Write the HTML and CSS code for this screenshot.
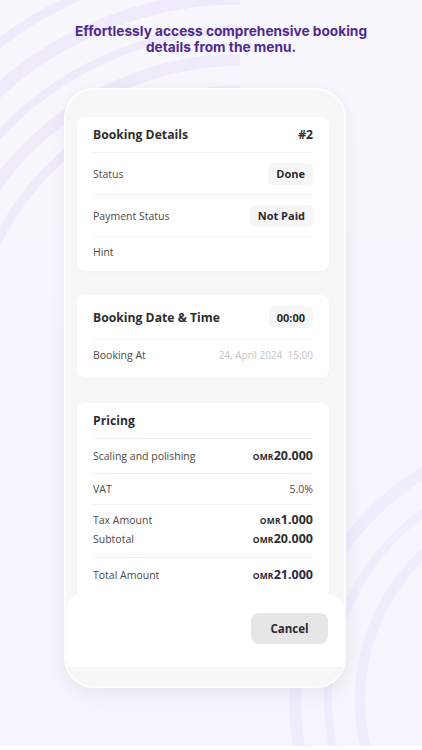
FILE: index.html
```html
<!DOCTYPE html>
<html>
<head>
<meta charset="utf-8">
<link rel="stylesheet" href="styles.css">
</head>
<body>
<div class="screen">
  <svg class="bg" width="422" height="750" viewBox="0 0 422 750">
    <g fill="none" stroke="#e6e0fa" stroke-opacity="0.5">
      <path d="M -30 360 A 270 270 0 0 1 240 90" stroke-width="9"/>
      <path d="M -60 360 A 300 300 0 0 1 240 60" stroke-width="12"/>
      <path d="M -90 360 A 330 330 0 0 1 240 30" stroke-width="8"/>
      <path d="M -122 360 A 362 362 0 0 1 240 -2" stroke-width="13"/>
      <path d="M -158 360 A 398 398 0 0 1 240 -38" stroke-width="9"/>
    </g>
    <g fill="none" stroke="#e6e0fa" stroke-opacity="0.4">
      <path d="M 560 900 A 200 200 0 0 1 360 700 A 200 200 0 0 1 560 500" stroke-width="10"/>
      <path d="M 560 932 A 232 232 0 0 1 328 700 A 232 232 0 0 1 560 468" stroke-width="8"/>
      <path d="M 560 965 A 265 265 0 0 1 295 700 A 265 265 0 0 1 560 435" stroke-width="12"/>
    </g>
  </svg>
  <h1 class="title">Effortlessly access comprehensive booking<br>details from the menu.</h1>
  <div class="phone">
    <div class="content">
      <section class="card">
        <div class="row head"><span class="h">Booking Details</span><span class="h">#2</span></div>
        <div class="row r42"><span class="lbl">Status</span><span class="badge">Done</span></div>
        <div class="row r42"><span class="lbl">Payment Status</span><span class="badge">Not Paid</span></div>
        <div class="row last hint"><span class="lbl">Hint</span></div>
      </section>
      <section class="card">
        <div class="row head2"><span class="h">Booking Date &amp; Time</span><span class="badge">00:00</span></div>
        <div class="row last at"><span class="lbl">Booking At</span><span class="muted">24, April 2024&nbsp; 15:00</span></div>
      </section>
      <section class="card">
        <div class="row head"><span class="h">Pricing</span></div>
        <div class="row r35"><span class="lbl">Scaling and polishing</span><span class="amt"><small>OMR</small>20.000</span></div>
        <div class="row r31"><span class="lbl">VAT</span><span class="lbl">5.0%</span></div>
        <div class="row stack">
          <div class="sub"><span class="lbl">Tax Amount</span><span class="amt"><small>OMR</small>1.000</span></div>
          <div class="sub"><span class="lbl">Subtotal</span><span class="amt"><small>OMR</small>20.000</span></div>
        </div>
        <div class="row last total"><span class="lbl">Total Amount</span><span class="amt purple"><small>OMR</small>21.000</span></div>
      </section>
    </div>
    <div class="sheet">
      <button class="cancel">Cancel</button>
    </div>
    <div class="foot"></div>
  </div>
  <div class="edge"></div>
</div>
</body>
</html>
```
FILE: styles.css
```css
* { box-sizing: border-box; margin: 0; padding: 0; }
html, body { width: 422px; height: 750px; overflow: hidden; }
body { background: #f7f5fd; font-family: "Open Sans", "Noto Sans", sans-serif; }
.screen { position: relative; width: 422px; height: 750px; overflow: hidden;
  background: linear-gradient(180deg, #f9f7fe 0%, #f7f5fd 55%, #f6f4fc 100%); }
.bg { position: absolute; left: 0; top: 0; }
.edge { position: absolute; left: 0; right: 0; bottom: 0; height: 4px; background: #fdfcff; }
.title { position: relative; text-align: center; font-family: Inter, sans-serif; font-weight: 700;
  font-size: 13.7px; line-height: 16px; color: #4f2a8c; padding: 23px 0 0 20px; }
.phone { position: relative; margin: 33px 0 0 64px; width: 282px; height: 600px;
  background: #f7f7f7; border-radius: 30px; border: 2px solid #fdfdfd;
  box-shadow: 0 4px 18px rgba(120, 110, 160, 0.12); overflow: hidden;
  display: flex; flex-direction: column; }
.content { height: 504px; overflow: hidden; padding: 27px 15px 0 11px; display: flex; flex-direction: column; gap: 24px; }
.card { background: #fff; border-radius: 8px; padding: 0 16px; box-shadow: 0 1px 3px rgba(0,0,0,0.03); flex-shrink: 0; }
.card:nth-child(2) { margin-bottom: 1px; }
.row { display: flex; justify-content: space-between; align-items: center; border-bottom: 1px solid #f1f1f1; }
.row.last { border-bottom: none; }
.head { height: 36px; }
.head2 { height: 45px; }
.r42 { height: 42px; }
.r35 { height: 35px; }
.r31 { height: 31px; }
.hint { height: 34px; align-items: flex-start; padding-top: 8px; }
.at { height: 38px; align-items: flex-start; padding-top: 8px; }
.stack { height: 53px; flex-direction: column; justify-content: flex-start; align-items: stretch; padding-top: 8px; gap: 5px; }
.sub { display: flex; justify-content: space-between; align-items: center; height: 14px; }
.total { height: 40px; align-items: flex-start; padding-top: 10px; }
.h { font-size: 12.2px; font-weight: 700; color: #2d2d2d; }
.lbl { font-size: 10.5px; color: #4a4a4a; line-height: 14px; }
.muted { font-size: 10px; color: #c4c4c4; line-height: 14px; }
.badge { background: #f6f6f6; border-radius: 5px; font-size: 11px; font-weight: 700; color: #2b2b2b;
  height: 22px; padding: 0 8px; display: flex; align-items: center; }
.amt { font-size: 12.5px; font-weight: 700; color: #2e2e2e; line-height: 14px; }
.amt small { font-size: 8.5px; font-weight: 700; letter-spacing: 0.2px; }
.amt.purple { color: #2f2745; }
.sheet { position: absolute; left: 0; right: 0; top: 504px; height: 73px; background: #fff;
  border-radius: 16px 16px 0 0; display: flex; justify-content: flex-end; align-items: flex-start;
  padding: 19px 16px 0 0; }
.cancel { width: 77px; height: 31px; border: none; border-radius: 8px; background: #e6e6e6;
  font-family: "Open Sans", sans-serif; font-size: 11.5px; font-weight: 700; color: #2b2b2b; }
.foot { flex: 1; }
```
